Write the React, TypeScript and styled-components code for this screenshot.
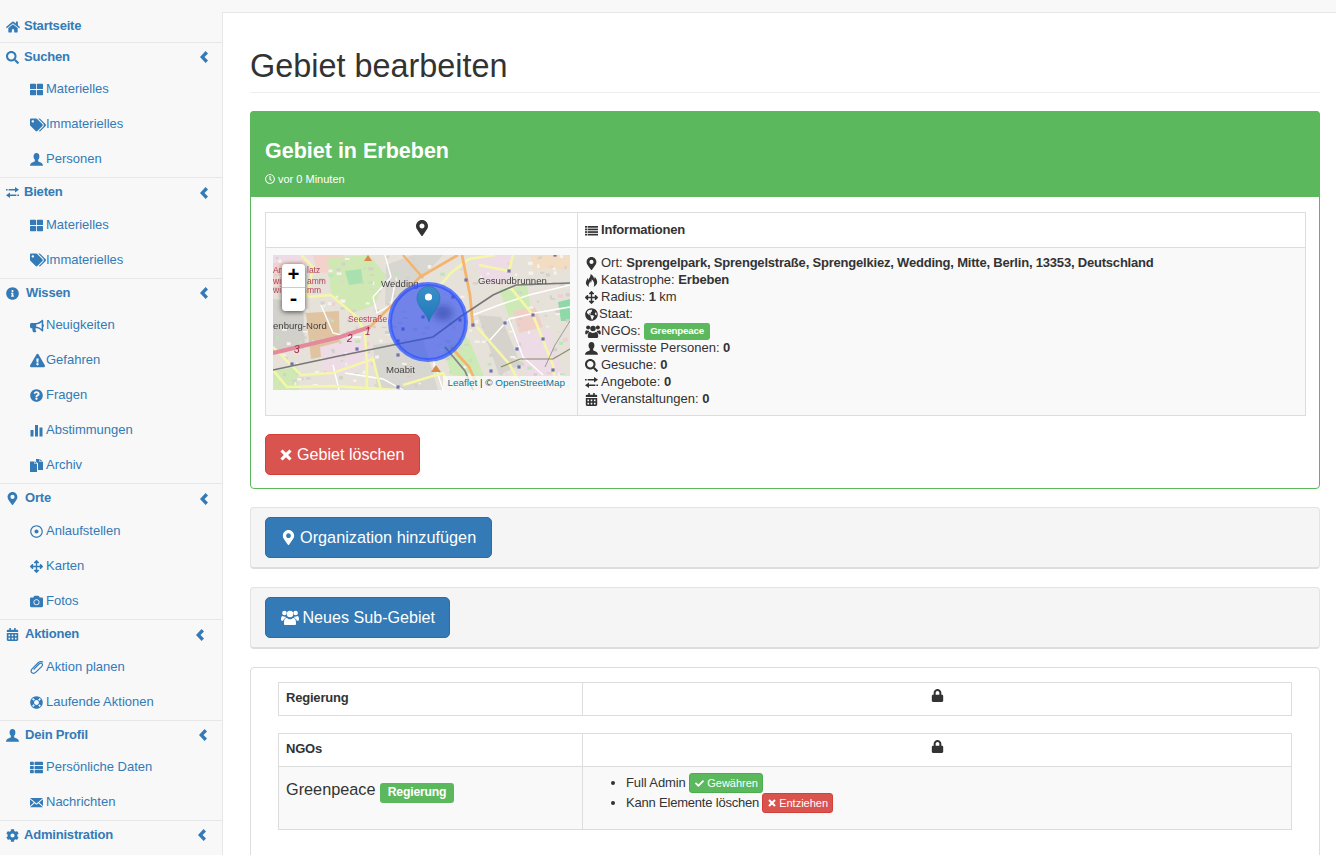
import React from "react";
import styled, {createGlobalStyle} from "styled-components";
import {
	FaArrowsAlt,
	FaBullhorn,
	FaCalendarAlt,
	FaCamera,
	FaCheck,
	FaCog,
	FaExclamationTriangle,
	FaGlobeAmericas,
	FaHome,
	FaInfoCircle,
	FaLifeRing,
	FaLock,
	FaMapMarkerAlt,
	FaQuestionCircle,
	FaRegClock,
	FaRegDotCircle,
	FaSearch,
	FaTags,
	FaThLarge,
	FaThList,
} from "react-icons/fa";
import {ImFire} from "react-icons/im";

const GlobalStyle = createGlobalStyle`
	html, body {
		margin: 0;
		height: 100%;
		overflow: hidden;
		background: #f8f8f8;
	}
	body {
		font-family: "Liberation Sans", Arial, sans-serif;
		font-size: 13px;
		line-height: 18.57px;
		color: #333;
	}
	* {
		box-sizing: border-box;
	}
`;

const Page = styled.div`
	display: flex;
	height: 855px;
	overflow: hidden;
`;

const Sidebar = styled.nav`
	flex: 0 0 222px;
	padding-top: 12px;
	background: #f8f8f8;
`;

const Group = styled.div`
	border-bottom: 1px solid #e7e7e7;

	&:last-child {
		border-bottom: 0;
	}
`;

const GroupHead = styled.a<{$extra?: number}>`
	display: flex;
	align-items: center;
	height: ${(p) => 29.5 + (p.$extra || 0)}px;
	padding: 0 0 0 6px;
	font-weight: bold;
	letter-spacing: -0.2px;
	color: #337ab7;
`;

const HeadIcon = styled.span<{$width: number}>`
	display: flex;
	flex: 0 0 ${(p) => p.$width}px;
	font-size: 13px;
`;

const Chevron = styled.span<{$right: number}>`
	display: flex;
	margin-left: auto;
	margin-right: ${(p) => p.$right}px;
`;

const SubItem = styled.a`
	display: flex;
	align-items: center;
	height: 35px;
	padding-left: 30px;
	color: #337ab7;
`;

const SubIcon = styled.span`
	display: flex;
	flex: 0 0 16px;
	font-size: 13px;
`;

const Main = styled.main`
	flex: 1;
	margin-top: 12px;
	padding: 0 16px 0 27px;
	background: #fff;
	border-top: 1px solid #e7e7e7;
	border-left: 1px solid #e7e7e7;
`;

const PageHeader = styled.h1`
	margin: 0 0 18px;
	padding: 32px 0 6px;
	height: 80px;
	font-size: 32.4px;
	font-weight: 500;
	line-height: 42px;
	color: #333;
	border-bottom: 1px solid #eee;
`;

const SuccessPanel = styled.section`
	margin-bottom: 18px;
	border: 1px solid #5cb85c;
	border-radius: 4px;
	background: #fff;
`;

const PanelHeading = styled.header`
	height: 86px;
	margin: -1px -1px 0;
	padding: 28px 15px 0;
	background: #5cb85c;
	border-radius: 4px 4px 0 0;
	color: #fff;
`;

const PanelTitle = styled.h3`
	margin: 0 0 8px;
	font-size: 21.5px;
	font-weight: bold;
	line-height: 24px;
`;

const PanelMeta = styled.small`
	display: flex;
	align-items: center;
	gap: 3px;
	font-size: 11px;
	line-height: 16px;
`;

const PanelBody = styled.div`
	padding: 15px 13px 13px 14px;
`;

const Table = styled.table<{$gap?: number}>`
	width: 100%;
	margin-bottom: ${(p) => p.$gap || 0}px;
	table-layout: fixed;
	border-collapse: collapse;
	background: #fff;
`;

const HeadCell = styled.th<{$center?: boolean; $tall?: boolean}>`
	height: ${(p) => (p.$tall ? 35 : 33)}px;
	padding: ${(p) => (!p.$tall ? "0 7px 1px" : p.$center ? "1px 7px 0" : "3px 7px 0")};
	border: 1px solid #ddd;
	font-weight: bold;
	letter-spacing: -0.2px;
	text-align: ${(p) => (p.$center ? "center" : "left")};
	vertical-align: middle;
	color: #333;
`;

const InfoTitle = styled.span`
	display: inline-flex;
	align-items: center;
	gap: 3px;
`;

const MarkerHead = styled.span`
	display: inline-flex;
	font-size: 16px;
	color: #333;
`;

const Cell = styled.td`
	padding: 7px;
	border: 1px solid #ddd;
	background: #f9f9f9;
	vertical-align: top;
`;

const MapBox = styled.div`
	position: relative;
	width: 297px;
	height: 135px;
	overflow: hidden;
	background: #e4e0d8;
`;

const MapCanvas = styled.svg`
	display: block;
	width: 297px;
	height: 135px;
`;

const ZoomControl = styled.div`
	position: absolute;
	top: 9px;
	left: 9px;
	width: 23px;
	border-radius: 4px;
	overflow: hidden;
	box-shadow: 0 1px 5px rgba(0, 0, 0, 0.65);
`;

const ZoomButton = styled.a`
	display: block;
	height: 23.5px;
	background: #fff;
	border-bottom: 1px solid #ccc;
	font-family: "Liberation Mono", monospace;
	font-size: 20px;
	font-weight: bold;
	line-height: 23px;
	text-align: center;
	color: #000;

	&:last-child {
		border-bottom: 0;
	}
`;

const Attribution = styled.div`
	position: absolute;
	right: 0;
	bottom: 0;
	height: 14px;
	padding: 0 5px;
	background: rgba(255, 255, 255, 0.7);
	font-size: 9.9px;
	line-height: 14px;
	color: #333;
`;

const MapLink = styled.a`
	color: #0078a8;
`;

const InfoRow = styled.div<{$gap?: number}>`
	display: flex;
	align-items: center;
	height: 17px;
	gap: ${(p) => p.$gap ?? 3}px;
	white-space: pre;
`;

const InfoIcon = styled.span<{$width?: number}>`
	display: inline-flex;
	justify-content: flex-start;
	flex: 0 0 ${(p) => p.$width || 13}px;
	font-size: 13px;
	color: #333;
`;

const Label = styled.span<{$size: number}>`
	display: inline-block;
	padding: 0.3em 0.6em 0.35em;
	border-radius: 0.25em;
	background: #5cb85c;
	font-size: ${(p) => p.$size}px;
	font-weight: bold;
	line-height: 1;
	letter-spacing: -0.2px;
	color: #fff;
	white-space: nowrap;
`;

const OrgLabel = styled(Label)`
	margin-top: 6px;
`;

const Button = styled.a<{$kind: "danger" | "primary"; $size?: number}>`
	display: inline-flex;
	align-items: center;
	height: 41px;
	padding: 0 14.5px;
	gap: 4px;
	border: 1px solid ${(p) => (p.$kind === "danger" ? "#d43f3a" : "#2e6da4")};
	border-radius: 5px;
	background: ${(p) => (p.$kind === "danger" ? "#d9534f" : "#337ab7")};
	font-size: ${(p) => p.$size || 16.1}px;
	color: #fff;
`;

const ButtonIcon = styled.span<{$shift?: number; $after?: number}>`
	display: flex;
	margin-left: ${(p) => p.$shift || 0}px;
	margin-right: ${(p) => p.$after || 0}px;
`;

const ActionRow = styled.div`
	margin-top: 18px;
`;

const Well = styled.section`
	height: 62px;
	margin-bottom: 18px;
	padding: 9px 14px;
	background: #f5f5f5;
	border: 1px solid #e3e3e3;
	border-bottom: 2px solid #ddd;
	border-radius: 4px;
`;

const RightsPanel = styled.section`
	height: 260px;
	padding: 14px 27px;
	background: #fff;
	border: 1px solid #ddd;
	border-radius: 4px;
`;

const OrgCell = styled(Cell)`
	height: 63px;
	padding: 9.5px 7px 7px;
`;

const OrgName = styled.span`
	display: inline-flex;
	align-items: center;
	gap: 5px;
	font-size: 16.25px;
`;

const RightsList = styled.ul`
	margin: 0;
	padding: 0 0 0 36px;
`;

const RightsItem = styled.li<{$spacing: number}>`
	height: 20px;
	line-height: 17px;
	letter-spacing: ${(p) => p.$spacing}px;
`;

const MiniButton = styled.a<{$kind: "success" | "danger"}>`
	display: inline-flex;
	align-items: center;
	gap: 3px;
	height: 20px;
	margin: -1px 0 0 3px;
	padding: ${(p) => (p.$kind === "success" ? "0 4.5px 0 5.5px" : "0 4px 0 5px")};
	vertical-align: top;
	border: 1px solid ${(p) => (p.$kind === "success" ? "#4cae4c" : "#d43f3a")};
	border-radius: 3px;
	background: ${(p) => (p.$kind === "success" ? "#5cb85c" : "#d9534f")};
	font-size: 11px;
	line-height: 18px;
	letter-spacing: 0;
	color: #fff;
`;

const Strong = styled.b`
	font-weight: bold;
	letter-spacing: -0.2px;
`;

const ChevronIcon = () => (
	<svg width="8" height="12" viewBox="0 0 8 12" fill="currentColor">
		<polygon points="5.6,0 8,2.4 4.5,6 8,9.6 5.6,12 0,6" />
	</svg>
);

const StatsIcon = () => (
	<svg width="13" height="13" viewBox="0 0 13 13" fill="currentColor">
		<rect x="0.5" y="6" width="3" height="6.5" />
		<rect x="5" y="1" width="3" height="11.5" />
		<rect x="9.5" y="3.5" width="3" height="9" />
	</svg>
);

const DuplicateIcon = () => (
	<svg width="13" height="13" viewBox="0 0 13 13" fill="currentColor">
		<path d="M0 2.5 H4.5 V5 H7 V13 H0 Z" />
		<path d="M5 2.5 L7 4.5 H5 Z" />
		<path d="M6 0 H9.5 V3 H13 V11 H8 V4.5 L6 2.5 Z" />
		<path d="M10.2 0.2 L12.8 2.5 H10.2 Z" />
	</svg>
);

const MailIcon = () => (
	<svg width="13" height="13" viewBox="0 0 13 13" fill="currentColor">
		<path d="M0 2 H13 L6.5 7.5 Z" />
		<path d="M0 3.2 L3.8 6.5 L0 10 Z" />
		<path d="M13 3.2 L9.2 6.5 L13 10 Z" />
		<path d="M0 11.2 L4.6 7.2 L6.5 8.8 L8.4 7.2 L13 11.2 Z" />
	</svg>
);

const UserIcon = ({size = 13}: {size?: number}) => (
	<svg width={size} height={size} viewBox="0 0 13 13" fill="currentColor">
		<ellipse cx="6.5" cy="3.6" rx="2.9" ry="3.5" />
		<path d="M0 12.8 C0 10.2 2 9.4 4.7 8.4 L5 6 H8 L8.3 8.4 C11 9.4 13 10.2 13 12.8 Z" />
	</svg>
);

const TransferIcon = () => (
	<svg width="13" height="13" viewBox="0 0 13 13" fill="currentColor">
		<rect x="0" y="3" width="1.6" height="1.5" />
		<rect x="2.6" y="3" width="6.4" height="1.5" />
		<polygon points="9,1 9,6.5 13,3.75" />
		<polygon points="4,6.5 4,12 0,9.25" />
		<rect x="4" y="8.5" width="6.4" height="1.5" />
		<rect x="11.4" y="8.5" width="1.6" height="1.5" />
	</svg>
);

const ClipIcon = () => (
	<svg width="14" height="13" viewBox="0 0 14 13" fill="none" stroke="currentColor" strokeWidth="1.2">
		<path d="M3.6 8.6 L9 3 C10 2 11.4 2 12 2.6 C12.7 3.3 12.6 4.6 11.6 5.6 L5.6 11.4 C4.4 12.6 2.6 12.6 1.7 11.7 C0.8 10.8 0.9 9.1 2.1 7.9 L8.2 1.7 C9.6 0.3 11.8 0.2 12.9 1.3" />
	</svg>
);

const RemoveIcon = ({size}: {size: number}) => (
	<svg width={size} height={size} viewBox="0 0 12 12" fill="currentColor">
		<polygon points="2.6,0.4 6,3.8 9.4,0.4 11.6,2.6 8.2,6 11.6,9.4 9.4,11.6 6,8.2 2.6,11.6 0.4,9.4 3.8,6 0.4,2.6" />
	</svg>
);

const UsersIcon = ({width, height}: {width: number; height: number}) => (
	<svg width={width} height={height} viewBox="0 0 18 15" fill="currentColor">
		<circle cx="3.4" cy="3" r="2.3" />
		<circle cx="14.6" cy="3" r="2.3" />
		<circle cx="9" cy="4" r="3.2" />
		<path d="M4.4 15 C3.4 15 3 14.4 3 13.4 C3 10.2 3.6 8 6 8 C7 8.9 8 9.2 9 9.2 C10 9.2 11 8.9 12 8 C14.4 8 15 10.2 15 13.4 C15 14.4 14.6 15 13.6 15 Z" />
		<path d="M0 9.4 C0 7.4 0.4 6 1.8 6 C2.6 6.6 3.2 6.8 4.4 6.6 C4.4 7.2 4.6 7.6 4.9 8 C3.4 8.4 2.4 9.6 2.1 10.8 C0.9 10.8 0 10.6 0 9.4 Z" />
		<path d="M18 9.4 C18 7.4 17.6 6 16.2 6 C15.4 6.6 14.8 6.8 13.6 6.6 C13.6 7.2 13.4 7.6 13.1 8 C14.6 8.4 15.6 9.6 15.9 10.8 C17.1 10.8 18 10.6 18 9.4 Z" />
	</svg>
);

const LinesIcon = () => (
	<svg width="13" height="13" viewBox="0 0 13 13" fill="currentColor">
		{[2, 4.6, 7.2, 9.8].map((y) => (
			<g key={y}>
				<rect x="0" y={y} width="2.4" height="1.7" />
				<rect x="3" y={y} width="10" height="1.7" />
			</g>
		))}
	</svg>
);

interface SubEntry {
	icon: React.ReactNode;
	label: string;
}

interface NavEntry {
	icon: React.ReactNode;
	label: string;
	iconWidth: number;
	chevron?: number;
	extra?: number;
	subs?: SubEntry[];
}

const nav: NavEntry[] = [
	{icon: <FaHome size={14} />, label: "Startseite", iconWidth: 18},
	{
		icon: <FaSearch />,
		label: "Suchen",
		iconWidth: 18,
		chevron: 14,
		subs: [
			{icon: <FaThLarge />, label: "Materielles"},
			{icon: <FaTags size={16} />, label: "Immaterielles"},
			{icon: <UserIcon />, label: "Personen"},
		],
	},
	{
		icon: <TransferIcon />,
		label: "Bieten",
		iconWidth: 18,
		chevron: 14,
		subs: [
			{icon: <FaThLarge />, label: "Materielles"},
			{icon: <FaTags size={16} />, label: "Immaterielles"},
		],
	},
	{
		icon: <FaInfoCircle />,
		label: "Wissen",
		iconWidth: 20,
		chevron: 14,
		subs: [
			{icon: <FaBullhorn size={14} />, label: "Neuigkeiten"},
			{icon: <FaExclamationTriangle size={15} />, label: "Gefahren"},
			{icon: <FaQuestionCircle />, label: "Fragen"},
			{icon: <StatsIcon />, label: "Abstimmungen"},
			{icon: <DuplicateIcon />, label: "Archiv"},
		],
	},
	{
		icon: <FaMapMarkerAlt />,
		label: "Orte",
		iconWidth: 19,
		chevron: 14,
		subs: [
			{icon: <FaRegDotCircle />, label: "Anlaufstellen"},
			{icon: <FaArrowsAlt />, label: "Karten"},
			{icon: <FaCamera />, label: "Fotos"},
		],
	},
	{
		icon: <FaCalendarAlt />,
		label: "Aktionen",
		iconWidth: 19,
		chevron: 18,
		extra: 0.5,
		subs: [
			{icon: <ClipIcon />, label: "Aktion planen"},
			{icon: <FaLifeRing />, label: "Laufende Aktionen"},
		],
	},
	{
		icon: <UserIcon />,
		label: "Dein Profil",
		iconWidth: 19,
		chevron: 15,
		extra: -0.5,
		subs: [
			{icon: <FaThList />, label: "Persönliche Daten"},
			{icon: <MailIcon />, label: "Nachrichten"},
		],
	},
	{icon: <FaCog />, label: "Administration", iconWidth: 18, chevron: 16},
];

// map content, all in the 297x135 space of the map
const poly = (pts: number[][]) => pts.map((p) => p.join(",")).join(" ");

const areas: [string, number[][]][] = [
	["#f3d2cc", [[40, 0], [72, 0], [66, 20], [44, 17]]],
	["#cfe8b4", [[55, 3], [96, 0], [113, 20], [102, 50], [80, 58], [58, 40]]],
	["#a9e0b0", [[72, 16], [88, 14], [90, 28], [76, 30]]],
	["#e0c3a0", [[33, 58], [66, 56], [67, 98], [38, 104]]],
	["#eddbe6", [[47, 92], [94, 80], [98, 110], [50, 124]]],
	["#eddbe6", [[0, 0], [40, 0], [40, 8], [0, 10]]],
	["#f3d2cc", [[0, 8], [30, 6], [30, 30], [0, 30]]],
	["#d2d0ca", [[0, 44], [30, 48], [32, 92], [0, 100]]],
	["#d8d6d0", [[113, 10], [140, 0], [170, 0], [150, 22], [112, 50]]],
	["#cdeab6", [[226, 34], [254, 30], [258, 56], [236, 62]]],
	["#f0cfc8", [[240, 56], [262, 52], [270, 72], [246, 78]]],
	["#f2dcc2", [[258, 0], [297, 0], [297, 14], [260, 14]]],
	["#8fd9a8", [[285, 47], [297, 44], [297, 66], [288, 66]]],
	["#d5d3cc", [[205, 60], [228, 62], [248, 110], [226, 120]]],
	["#eddbe6", [[240, 80], [276, 74], [290, 120], [256, 124]]],
	["#cdeab6", [[170, 92], [196, 84], [212, 124], [178, 120]]],
	["#d8d6d0", [[100, 90], [150, 84], [165, 135], [104, 135]]],
	["#cfe8b4", [[0, 116], [24, 112], [26, 135], [0, 135]]],
	["#eddbe6", [[200, 0], [240, 0], [236, 26], [210, 30]]],
];

const blocks: number[][] = [];
let seed = 17;
const rnd = () => {
	seed = (seed * 16807) % 2147483647;
	return seed / 2147483647;
};
for (let i = 0; i < 260; i++) {
	blocks.push([rnd() * 297, rnd() * 135, 1.5 + rnd() * 4, 1.2 + rnd() * 2.5, rnd()]);
}

const yellowRoads = [
	[[0, 92], [28, 120], [60, 118], [100, 104], [108, 135]],
	[[34, 42], [58, 40], [84, 62], [92, 78], [94, 110], [94, 135]],
	[[0, 115], [14, 132], [60, 131], [124, 135]],
	[[164, 34], [178, 18], [196, 4], [222, 0]],
	[[237, 32], [260, 60], [280, 110], [283, 135]],
	[[204, 72], [237, 110], [250, 135]],
	[[206, 10], [236, 16], [240, 0]],
	[[28, 0], [40, 12], [34, 42]],
	[[130, 130], [170, 118], [180, 135]],
];

const whiteRoads = [
	[[100, 42], [118, 22], [112, 0]],
	[[100, 42], [104, 58], [118, 50], [122, 28]],
	[[48, 50], [60, 78], [76, 82], [88, 82]],
	[[200, 60], [226, 50], [256, 40], [297, 30]],
	[[216, 86], [236, 64], [262, 58], [297, 52]],
	[[236, 64], [250, 102], [270, 120]],
	[[60, 110], [66, 135]],
	[[72, 118], [110, 124], [130, 135]],
	[[160, 104], [170, 135]],
];

const rail = [[0, 115], [66, 101], [130, 88], [160, 82], [187, 62], [220, 40], [243, 30], [297, 28]];

const stations = [
	[19, 109], [84, 94], [125, 86], [125, 100], [125, 132], [150, 62], [180, 42], [187, 65],
	[200, 70], [232, 68], [260, 60], [270, 84], [244, 94], [246, 112], [280, 115], [282, 0], [236, 16],
	[193, 25], [218, 116], [130, 74],
];

const darkLabels: [string, number, number][] = [
	["Wedding", 108, 32],
	["Gesundbrunnen", 205, 29],
	["enburg-Nord", 0, 74],
	["Moabit", 113, 118],
];

const redLabels: [string, number, number][] = [
	["Ar", 0, 18],
	["latz", 34, 18],
	["wi", 0, 29],
	["amm", 34, 29],
	["wi", 0, 38],
	["mm", 34, 38],
	["Seestraße", 75, 67],
];

const shields: [string, number, number][] = [
	["1", 92, 80],
	["2", 74, 87],
	["3", 21, 98],
];

const MapDrawing = () => (
	<MapCanvas viewBox="0 0 297 135">
		<defs>
			<filter id="soft" x="0" y="0" width="100%" height="100%">
				<feGaussianBlur stdDeviation="0.35" />
			</filter>
			<filter id="shade" x="-50%" y="-50%" width="200%" height="200%">
				<feGaussianBlur stdDeviation="3" />
			</filter>
			<linearGradient id="pin" x1="0" y1="0" x2="0" y2="1">
				<stop offset="0" stopColor="#3a8fc8" />
				<stop offset="1" stopColor="#1f78b8" />
			</linearGradient>
		</defs>
		<g filter="url(#soft)">
			<rect width="297" height="135" fill="#e6e2da" />
			{areas.map(([color, pts], i) => (
				<polygon key={i} points={poly(pts)} fill={color} />
			))}
			{blocks.map(([x, y, w, h, k], i) => (
				<rect
					key={i}
					x={x}
					y={y}
					width={w}
					height={h}
					fill={k < 0.55 ? "#d4d1ca" : k < 0.8 ? "#f6f3ec" : k < 0.92 ? "#bfe6bb" : "#eccfd0"}
				/>
			))}
			{whiteRoads.map((pts, i) => (
				<polyline key={i} points={poly(pts)} fill="none" stroke="#fff" strokeWidth="1.4" />
			))}
			{yellowRoads.map((pts, i) => (
				<polyline key={i} points={poly(pts)} fill="none" stroke="#f5f7a8" strokeWidth="2.6" />
			))}
			<polyline points="0,98 67,82 97,72" fill="none" stroke="#e58a9c" strokeWidth="4" />
			<polyline points="97,72 147,22 185,0" fill="none" stroke="#f5b46e" strokeWidth="2.6" />
			<polyline points="130,0 150,23" fill="none" stroke="#f5b46e" strokeWidth="2.6" />
			<polyline points="189,0 197,40 200,72" fill="none" stroke="#f5b46e" strokeWidth="2.8" />
			<polyline points="178,92 196,112 204,130" fill="none" stroke="#f5b46e" strokeWidth="2.8" />
			<polyline points="172,92 192,116 200,135" fill="none" stroke="#888" strokeWidth="1.8" />
			<polyline points="228,112 247,104 280,104 297,94" fill="none" stroke="#8a8a66" strokeWidth="1.2" />
			<polyline points={poly(rail)} fill="none" stroke="#777" strokeWidth="1.6" />
			<polyline points="297,66 282,90 272,112" fill="none" stroke="#888" strokeWidth="0.8" />
			{stations.map(([x, y], i) => (
				<rect key={i} x={x - 1.6} y={y - 1.6} width="3.2" height="3.2" fill="#7272b0" />
			))}
			<polygon points="91,6 95,0 99,6" fill="#d98a4a" />
			<polygon points="158,117 163,110 168,117" fill="#d98a4a" />
			{darkLabels.map(([text, x, y]) => (
				<text key={text} x={x} y={y} fontSize="9.6" fill="#444" fontFamily="Liberation Sans">{text}</text>
			))}
			{redLabels.map(([text, x, y], i) => (
				<text key={i} x={x} y={y} fontSize="8.5" fill="#b8405c" fontFamily="Liberation Sans">{text}</text>
			))}
			{shields.map(([text, x, y]) => (
				<text key={text} x={x} y={y} fontSize="10" fontStyle="italic" fill="#a02848" fontFamily="Liberation Sans">{text}</text>
			))}
		</g>
		<circle cx="155" cy="67" r="38" fill="#2848f0" fillOpacity="0.62" stroke="#2f55ff" strokeOpacity="0.75" strokeWidth="4" />
		<ellipse cx="170" cy="58" rx="10" ry="8" fill="#1d3290" fillOpacity="0.4" filter="url(#shade)" />
		<path
			d="M156 67 C153 57 144 52 144 43 A11.5 11.5 0 1 1 167 43 C167 52 159 57 156 67 Z"
			fill="url(#pin)"
			stroke="#2a6ea6"
			strokeWidth="0.6"
		/>
		<circle cx="155.5" cy="42" r="3.6" fill="#fff" />
	</MapCanvas>
);

const Columns = () => (
	<colgroup>
		<col width="304" />
		<col />
	</colgroup>
);

const LockHead = () => (
	<HeadCell $center>
		<MarkerHead>
			<FaLock size={13} />
		</MarkerHead>
	</HeadCell>
);

export default function App() {
	return (
		<Page>
			<GlobalStyle />
			<Sidebar>
				{nav.map((entry) => (
					<Group key={entry.label}>
						<GroupHead $extra={entry.extra}>
							<HeadIcon $width={entry.iconWidth}>{entry.icon}</HeadIcon>
							{entry.label}
							{entry.chevron && (
								<Chevron $right={entry.chevron}>
									<ChevronIcon />
								</Chevron>
							)}
						</GroupHead>
						{entry.subs?.map((sub) => (
							<SubItem key={sub.label}>
								<SubIcon>{sub.icon}</SubIcon>
								{sub.label}
							</SubItem>
						))}
					</Group>
				))}
			</Sidebar>
			<Main>
				<PageHeader>Gebiet bearbeiten</PageHeader>
				<SuccessPanel>
					<PanelHeading>
						<PanelTitle>Gebiet in Erbeben</PanelTitle>
						<PanelMeta>
							<FaRegClock size={10} />
							vor 0 Minuten
						</PanelMeta>
					</PanelHeading>
					<PanelBody>
						<Table>
							<colgroup>
								<col width="312" />
								<col />
							</colgroup>
							<tbody>
								<tr>
									<HeadCell $center $tall>
										<MarkerHead>
											<FaMapMarkerAlt />
										</MarkerHead>
									</HeadCell>
									<HeadCell $tall>
										<InfoTitle>
											<LinesIcon />
											Informationen
										</InfoTitle>
									</HeadCell>
								</tr>
								<tr>
									<Cell>
										<MapBox>
											<MapDrawing />
											<ZoomControl>
												<ZoomButton>+</ZoomButton>
												<ZoomButton>-</ZoomButton>
											</ZoomControl>
											<Attribution>
												<MapLink>Leaflet</MapLink> | © <MapLink>OpenStreetMap</MapLink>
											</Attribution>
										</MapBox>
									</Cell>
									<Cell>
										<InfoRow>
											<InfoIcon><FaMapMarkerAlt /></InfoIcon>
											<span>Ort: <Strong>Sprengelpark, Sprengelstraße, Sprengelkiez, Wedding, Mitte, Berlin, 13353, Deutschland</Strong></span>
										</InfoRow>
										<InfoRow>
											<InfoIcon><ImFire /></InfoIcon>
											<span>Katastrophe: <Strong>Erbeben</Strong></span>
										</InfoRow>
										<InfoRow>
											<InfoIcon><FaArrowsAlt /></InfoIcon>
											<span>Radius: <Strong>1</Strong> km</span>
										</InfoRow>
										<InfoRow $gap={1}>
											<InfoIcon><FaGlobeAmericas /></InfoIcon>
											<span>Staat:</span>
										</InfoRow>
										<InfoRow $gap={0}>
											<InfoIcon $width={16}><UsersIcon width={16} height={13} /></InfoIcon>
											<span>NGOs: </span>
											<Label $size={9.75}>Greenpeace</Label>
										</InfoRow>
										<InfoRow>
											<InfoIcon><UserIcon /></InfoIcon>
											<span>vermisste Personen: <Strong>0</Strong></span>
										</InfoRow>
										<InfoRow>
											<InfoIcon><FaSearch /></InfoIcon>
											<span>Gesuche: <Strong>0</Strong></span>
										</InfoRow>
										<InfoRow>
											<InfoIcon><TransferIcon /></InfoIcon>
											<span>Angebote: <Strong>0</Strong></span>
										</InfoRow>
										<InfoRow>
											<InfoIcon><FaCalendarAlt /></InfoIcon>
											<span>Veranstaltungen: <Strong>0</Strong></span>
										</InfoRow>
									</Cell>
								</tr>
							</tbody>
						</Table>
						<ActionRow>
							<Button $kind="danger">
								<ButtonIcon $shift={-0.5} $after={1}>
									<RemoveIcon size={12} />
								</ButtonIcon>
								Gebiet löschen
							</Button>
						</ActionRow>
					</PanelBody>
				</SuccessPanel>
				<Well>
					<Button $kind="primary" $size={16.25}>
						<ButtonIcon $shift={0.5}>
							<FaMapMarkerAlt size={15} />
						</ButtonIcon>
						Organization hinzufügen
					</Button>
				</Well>
				<Well>
					<Button $kind="primary">
						<UsersIcon width={18} height={15} />
						Neues Sub-Gebiet
					</Button>
				</Well>
				<RightsPanel>
					<Table $gap={17}>
						<Columns />
						<tbody>
							<tr>
								<HeadCell>Regierung</HeadCell>
								<LockHead />
							</tr>
						</tbody>
					</Table>
					<Table>
						<Columns />
						<tbody>
							<tr>
								<HeadCell>NGOs</HeadCell>
								<LockHead />
							</tr>
							<tr>
								<OrgCell>
									<OrgName>
										Greenpeace <OrgLabel $size={12.2}>Regierung</OrgLabel>
									</OrgName>
								</OrgCell>
								<Cell>
									<RightsList>
										<RightsItem $spacing={-0.1}>
											Full Admin
											<MiniButton $kind="success">
												<FaCheck size={9} />
												Gewähren
											</MiniButton>
										</RightsItem>
										<RightsItem $spacing={-0.2}>
											Kann Elemente löschen
											<MiniButton $kind="danger">
												<RemoveIcon size={8} />
												Entziehen
											</MiniButton>
										</RightsItem>
									</RightsList>
								</Cell>
							</tr>
						</tbody>
					</Table>
				</RightsPanel>
			</Main>
		</Page>
	);
}
